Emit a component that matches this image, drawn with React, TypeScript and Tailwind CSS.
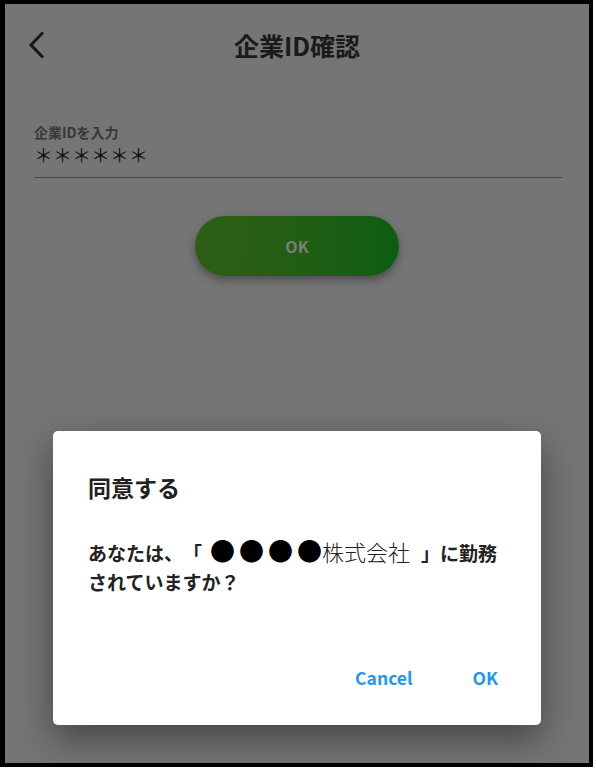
const FONT = { fontFamily: '"Noto Sans CJK JP", "Noto Sans", sans-serif' };

function BackIcon() {
  return (
    <svg width="18" height="28" viewBox="0 0 18 28" fill="none" aria-hidden="true">
      <path d="M15 2.5L4 14l11 11.5" stroke="#161616" strokeWidth="3" strokeLinecap="square" />
    </svg>
  );
}

// Confirmation dialog shown over the dimmed page
function ConfirmDialog() {
  return (
    <div className="absolute left-[48px] top-[427px] w-[488px] h-[294px] bg-white rounded-[5px] shadow-[0_14px_36px_rgba(0,0,0,0.42)] flex flex-col pl-[35px] pt-[42px] pb-[35px] pr-[43px]">
      <h2 className="text-[23px] leading-[28px] font-bold text-[#202020]">同意する</h2>
      <p className="mt-[35px] -mr-[30px] text-[19px] leading-[29px] font-bold text-[#222] whitespace-nowrap [text-spacing-trim:space-all]">
        あなたは、「
        {[0, 1, 2, 3].map((i) => (
          <span
            key={i}
            className={`font-normal text-[25px] leading-[29px] text-black ${i === 0 ? 'ml-[8px]' : ''} ${i < 3 ? 'mr-[4px]' : ''}`}
          >
            ●
          </span>
        ))}
        <span className="font-light text-[22px] leading-[29px] text-[#222]">株式会社</span>
        <span className="ml-[11px]">」に勤務</span>
        <br />
        されていますか？
      </p>
      <div className="mt-auto flex justify-end gap-[60px] text-[17.5px] leading-[24px] font-bold text-[#2196f3]">
        <button type="button">Cancel</button>
        <button type="button">OK</button>
      </div>
    </div>
  );
}

export default function App() {
  return (
    <div style={FONT} className="w-[593px] h-[767px] border-4 border-l-[5px] border-black bg-[#757575] relative overflow-hidden">
      {/* Header */}
      <header className="h-[82px] grid grid-cols-[1fr_auto_1fr] items-center px-[22px]">
        <button type="button" className="justify-self-start">
          <BackIcon />
        </button>
        <h1 className="text-[25px] font-bold text-[#1a1a1a] leading-none">企業ID確認</h1>
        <div />
      </header>

      {/* Company ID input */}
      <div className="mt-[38px] ml-[29px] mr-[27px] border-b-[1.5px] border-[#4a4a4a] pb-[10px]">
        <div className="text-[14px] leading-[17px] font-bold text-[#383838]">企業IDを入力</div>
        <div className="mt-[2px] text-[19px] leading-[24px] text-[#111]">＊＊＊＊＊＊</div>
      </div>

      <div className="mt-[38px] flex justify-center">
        <button
          type="button"
          className="w-[204px] h-[60px] rounded-full bg-gradient-to-r from-[#2f5e15] to-[#0b5e12] shadow-[0_4px_8px_rgba(0,0,0,0.35)] text-[16px] font-bold text-[#7c7c7c]"
        >
          OK
        </button>
      </div>

      <ConfirmDialog />
    </div>
  );
}
